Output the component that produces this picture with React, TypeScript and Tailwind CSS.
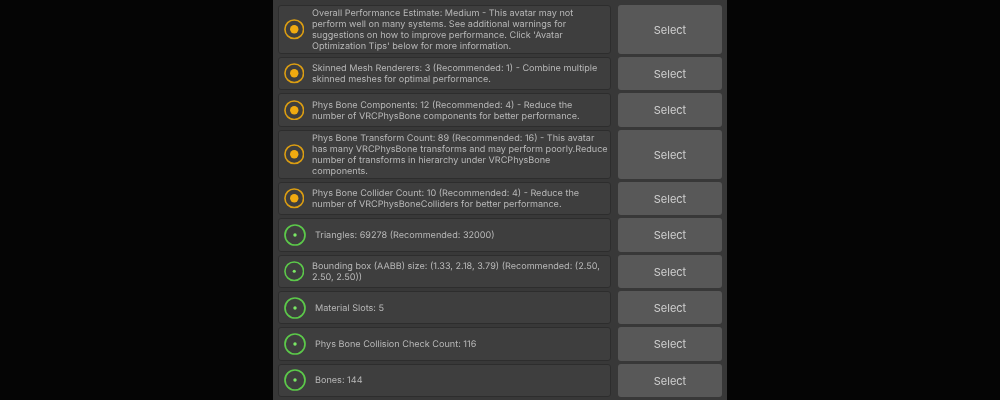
const rows = [
  { level: 'warn', h: 'h-[49px]', text: "Overall Performance Estimate: Medium - This avatar may not\nperform well on many systems. See additional warnings for\nsuggestions on how to improve performance. Click 'Avatar\nOptimization Tips' below for more information." },
  { level: 'warn', h: 'h-[33.4px]', text: 'Skinned Mesh Renderers: 3 (Recommended: 1) - Combine multiple\nskinned meshes for optimal performance.' },
  { level: 'warn', h: 'h-[33.4px]', text: 'Phys Bone Components: 12 (Recommended: 4) - Reduce the\nnumber of VRCPhysBone components for better performance.' },
  { level: 'warn', h: 'h-[49px]', text: 'Phys Bone Transform Count: 89 (Recommended: 16) - This avatar\nhas many VRCPhysBone transforms and may perform poorly.Reduce\nnumber of transforms in hierarchy under VRCPhysBone\ncomponents.' },
  { level: 'warn', h: 'h-[33.4px]', text: 'Phys Bone Collider Count: 10 (Recommended: 4) - Reduce the\nnumber of VRCPhysBoneColliders for better performance.' },
  { level: 'ok', h: 'h-[33.4px]', big: true, text: 'Triangles: 69278 (Recommended: 32000)' },
  { level: 'ok', h: 'h-[33.4px]', text: 'Bounding box (AABB) size: (1.33, 2.18, 3.79) (Recommended: (2.50,\n2.50, 2.50))' },
  { level: 'ok', h: 'h-[33.4px]', big: true, text: 'Material Slots: 5' },
  { level: 'ok', h: 'h-[33.4px]', big: true, text: 'Phys Bone Collision Check Count: 116' },
  { level: 'ok', h: 'h-[33.4px]', big: true, text: 'Bones: 144' },
];

// ring icon, the single line rows get a slightly bigger one
function StatusIcon({ level, big }: { level: string; big?: boolean }) {
  const size = big ? 22 : 20.5;
  const ok = level === 'ok';
  return (
    <svg width={size} height={size} viewBox="0 0 22 22" className="shrink-0">
      <circle cx="11" cy="11" r="10" fill="none" stroke={ok ? '#5cc94a' : '#dc9e12'} strokeWidth="1.7" />
      <circle cx="11" cy="11" r={ok ? 1.7 : 4.5} fill={ok ? '#7be865' : '#f0aa10'} />
    </svg>
  );
}

export default function App() {
  return (
    <div className="h-[400px] w-[1000px] overflow-hidden bg-[#050505] flex justify-center font-['Inter',sans-serif]">
      <div className="w-[454px] h-full bg-[#383838] pt-[5px] px-[5px] flex flex-col gap-[3px] blur-[0.35px]">
        {rows.map((r, i) => (
          <div key={i} className={`flex gap-[7px] shrink-0 ${r.h}`}>
            <div className={`w-[333px] flex items-center bg-[#3e3e3e] border border-[#2d2d2d] rounded-[3px] ${r.big ? 'pl-[5px] gap-[9px]' : 'pl-[4.5px] gap-[8px]'}`}>
              <StatusIcon level={r.level} big={r.big} />
              <p className="pt-[1px] text-[9.1px] [text-rendering:geometricPrecision] leading-[11px] text-[#b8b8b8] flex-1 whitespace-pre-line">{r.text}</p>
            </div>
            <button className="w-[104px] pt-[1px] bg-[#585858] rounded-[3px] text-[11px] text-[#d0d0d0]">Select</button>
          </div>
        ))}
      </div>
    </div>
  );
}
